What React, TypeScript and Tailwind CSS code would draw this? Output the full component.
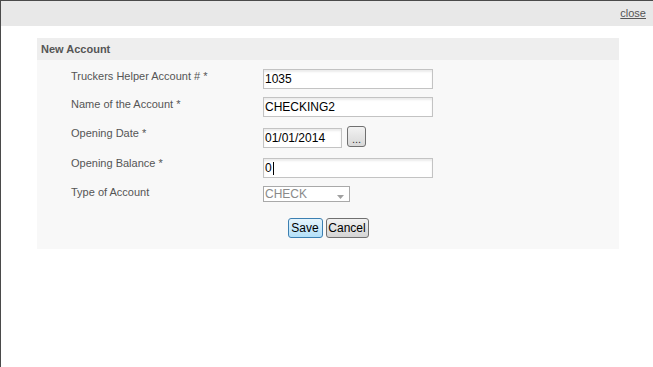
import React from "react";

const fields = [
  { label: "Truckers Helper Account # *", value: "1035", mt: "mt-[9px]" },
  { label: "Name of the Account *", value: "CHECKING2", mt: "mt-[8px]" },
];

function TextBox({ value, caret = false, className = "" }: { value: string; caret?: boolean; className?: string }) {
  return (
    <div
      className={`h-[20px] border border-[#c3c3c3] bg-white px-[1px] flex items-center text-[12px] text-black shadow-[inset_0_2px_2px_rgba(0,0,0,0.08)] ${className}`}
    >
      {value}
      {caret && <span className="ml-[1px] w-[1px] h-[13px] bg-black" />}
    </div>
  );
}

function Label({ children }: { children: React.ReactNode }) {
  return <div className="w-[226px] shrink-0 pl-[34px] text-[11px] leading-[14px] text-[#555]">{children}</div>;
}

export default function App() {
  return (
    <div className="w-[653px] h-[367px] bg-white border-l border-t border-[#4a4a4a] font-['Liberation_Sans',Arial,sans-serif] overflow-hidden">
      <div className="h-[25px] bg-[#e8e8e8] flex items-center justify-end pr-[7px]">
        <a href="#" className="text-[11px] text-[#555] underline">
          close
        </a>
      </div>

      <div className="mt-[12px] ml-[36px] w-[582px] bg-[#f8f8f8] pb-[11px]">
        <div className="h-[22px] bg-[#eeeeee] pl-[4px] flex items-center text-[11px] font-bold text-[#555]">
          New Account
        </div>

        {fields.map((f) => (
          <div key={f.label} className={`flex items-start ${f.mt}`}>
            <Label>
              <div>{f.label}</div>
            </Label>
            <TextBox value={f.value} className="w-[170px]" />
          </div>
        ))}

        <div className="flex items-start mt-[9px]">
          <Label>
            <div>Opening Date *</div>
          </Label>
          <TextBox value="01/01/2014" className="w-[79px] mt-[2px]" />
          <button className="ml-[5px] w-[19px] h-[21px] rounded-[3px] border border-[#707070] bg-gradient-to-b from-[#f2f2f2] to-[#d8d8d8] flex items-end justify-center pb-[3px] text-[11px] leading-[8px] text-[#333]">
            ...
          </button>
        </div>

        <div className="flex items-start mt-[10px]">
          <Label>
            <div className="mt-[-2px]">Opening Balance *</div>
          </Label>
          <TextBox value="0" caret className="w-[170px]" />
        </div>

        <div className="flex items-start mt-[8px]">
          <Label>
            <div className="mt-[-1px]">Type of Account</div>
          </Label>
          <div className="w-[87px] h-[16px] border border-[#a9a9a9] bg-white flex items-center justify-between pl-[1px] pr-[5px] text-[12px] leading-[14px] text-[#8a8a8a]">
            <span>CHECK</span>
            <svg width="7" height="4" viewBox="0 0 7 4" className="mt-[5px]">
              <path d="M0 0 L7 0 L3.5 4 Z" fill="#a0a0a0" />
            </svg>
          </div>
        </div>

        <div className="flex justify-center gap-[3px] mt-[16px]">
          <button className="w-[35px] h-[20px] rounded-[3px] border border-[#3c7fb1] bg-gradient-to-b from-[#e5f4fc] to-[#b3e0f9] text-[12px] text-black leading-none">
            Save
          </button>
          <button className="w-[43px] h-[20px] rounded-[3px] border border-[#707070] bg-gradient-to-b from-[#f2f2f2] to-[#d4d4d4] text-[12px] text-black leading-none">
            Cancel
          </button>
        </div>
      </div>
    </div>
  );
}
